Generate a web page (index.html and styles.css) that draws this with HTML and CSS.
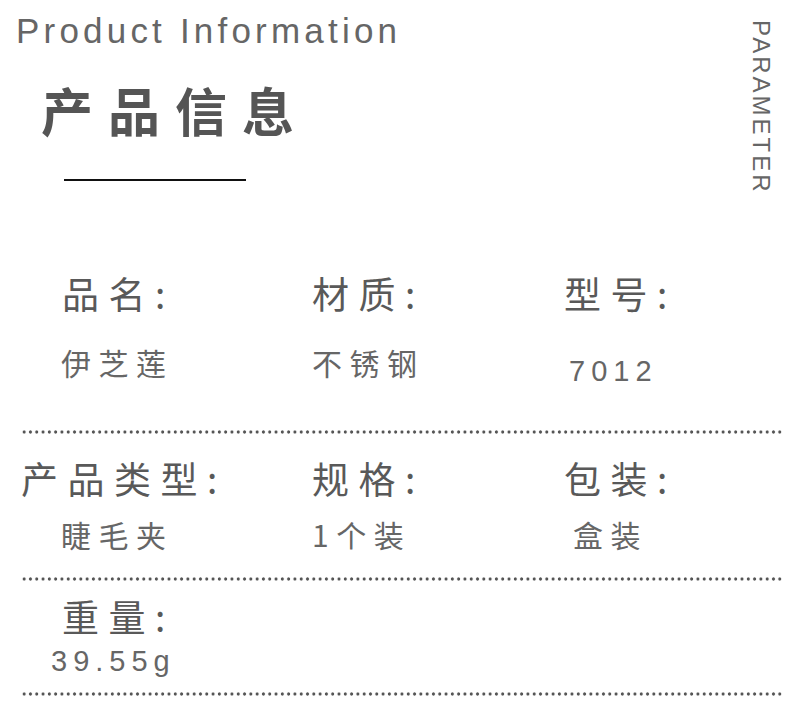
FILE: index.html
```html
<!DOCTYPE html>
<html lang="zh-CN">
<head>
  <meta charset="UTF-8">
  <meta name="viewport" content="width=device-width, initial-scale=1.0">
  <title>产品信息</title>
  <link rel="stylesheet" href="styles.css">
</head>
<body>
  <div class="header">
    <div class="header-main">
      <div class="title-en">Product Information</div>
      <div class="title-cn">产品信息</div>
      <div class="title-rule"></div>
    </div>
    <div class="header-side">PARAMETER</div>
  </div>

  <div class="spec">
    <div class="spec-row row-first">
      <div class="spec-item">
        <div class="spec-label indent-label">品名:</div>
        <div class="spec-value indent-value">伊芝莲</div>
      </div>
      <div class="spec-item">
        <div class="spec-label">材质:</div>
        <div class="spec-value">不锈钢</div>
      </div>
      <div class="spec-item">
        <div class="spec-label">型号:</div>
        <div class="spec-value number model">7012</div>
      </div>
    </div>

    <div class="spec-row row-second">
      <div class="spec-item">
        <div class="spec-label">产品类型:</div>
        <div class="spec-value indent-value">睫毛夹</div>
      </div>
      <div class="spec-item">
        <div class="spec-label">规格:</div>
        <div class="spec-value">1个装</div>
      </div>
      <div class="spec-item">
        <div class="spec-label">包装:</div>
        <div class="spec-value pack">盒装</div>
      </div>
    </div>

    <div class="spec-row row-third">
      <div class="spec-item">
        <div class="spec-label indent-label">重量:</div>
        <div class="spec-value number weight">39.55g</div>
      </div>
    </div>
  </div>
</body>
</html>
```

FILE: styles.css
```css
body {
  margin: 0;
  padding: 0;
  background-color: #fff;
  color: #5a5a5a;
  font-family: "Noto Sans CJK SC", "Liberation Sans", sans-serif;
  overflow: hidden;
}

/* Header */
.header {
  display: flex;
  justify-content: space-between;
  align-items: flex-start;
  height: 181px;
  padding-right: 27px;
}

.title-en {
  padding: 13px 0 0 16px;
  font-family: "Liberation Sans", Arial, sans-serif;
  font-size: 35px;
  line-height: 1;
  letter-spacing: 4.2px;
  color: #666;
}

.title-cn {
  margin: 36px 0 0 41px;
  font-size: 52px;
  font-weight: 700;
  line-height: 1;
  letter-spacing: 15px;
  color: #555;
}

.title-rule {
  width: 182px;
  height: 2px;
  margin: 43px 0 0 64px;
  background-color: #111;
}

.header-side {
  margin-top: 20px;
  writing-mode: vertical-rl;
  font-family: "Liberation Sans", Arial, sans-serif;
  font-size: 24px;
  line-height: 1;
  letter-spacing: 3px;
  color: #666;
}

/* Spec table */
.spec {
  margin-top: 94px;
}

.spec-row {
  display: grid;
  grid-template-columns: 291px 252px 1fr;
  margin: 0 18px 0 21px;
  background-image: radial-gradient(circle at center, #555 1.3px, transparent 1.9px);
  background-size: 6.3px 4px;
  background-repeat: repeat-x;
  background-position: left bottom;
}

.spec-item {
  display: flex;
  flex-direction: column;
}

.spec-label {
  font-size: 37px;
  line-height: 1;
  letter-spacing: 9.5px;
  color: #595959;
}

.spec-value {
  font-size: 30px;
  line-height: 1;
  letter-spacing: 7.5px;
  color: #666;
}

.spec-value.number {
  font-family: "Liberation Sans", Arial, sans-serif;
  font-size: 29px;
  letter-spacing: 6px;
}

.indent-label {
  padding-left: 41px;
}

.indent-value {
  padding-left: 40px;
}

.row-first {
  padding-bottom: 48px;
}

.row-first .spec-item {
  gap: 35px;
}

.row-first .model {
  margin-top: 10px;
  padding-left: 5px;
}

.row-second {
  padding: 26px 0 32px;
}

.row-second .spec-item {
  gap: 22px;
}

.row-second .pack {
  padding-left: 9px;
}

.row-third {
  padding: 17px 0 20px;
}

.row-third .spec-item {
  gap: 12px;
}

.row-third .weight {
  padding-left: 30px;
}
```
